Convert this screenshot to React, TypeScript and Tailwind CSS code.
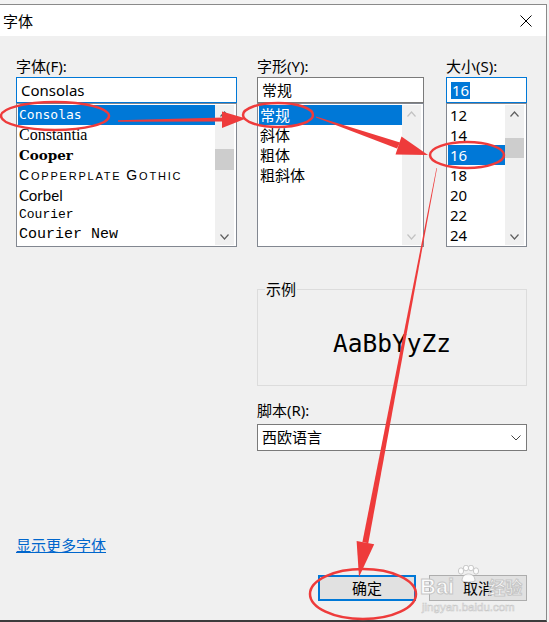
const RED = "#ee3b3b";

function Chevron({ dir, color }: { dir: "up" | "down"; color: string }) {
  return (
    <svg width="9" height="6" viewBox="0 0 9 6">
      <path
        d={dir === "up" ? "M0.5 5.5 L4.5 1 L8.5 5.5" : "M0.5 0.5 L4.5 5 L8.5 0.5"}
        fill="none"
        stroke={color}
        strokeWidth="1.2"
      />
    </svg>
  );
}

function ScrollBar({ thumb, disabled }: { thumb?: string; disabled?: boolean }) {
  const c = disabled ? "#c2c2c2" : "#606060";
  return (
    <div className="w-[19px] shrink-0 flex flex-col bg-[#f0f0f0] my-[1px] mr-[2px]">
      <div className="h-[17px] shrink-0 flex items-center justify-center">
        <Chevron dir="up" color={c} />
      </div>
      <div className="flex-1 flex flex-col">
        {thumb && <div className={`bg-[#cdcdcd] ${thumb}`} />}
      </div>
      <div className="h-[17px] shrink-0 flex items-center justify-center">
        <Chevron dir="down" color={c} />
      </div>
    </div>
  );
}

function Label({ children }: { children: React.ReactNode }) {
  return <div className="h-[21px] leading-[21px] text-[15px]">{children}</div>;
}

const sizes = ["12", "14", "16", "18", "20", "22", "24"];
const styles = ["常规", "斜体", "粗体", "粗斜体"];

export default function App() {
  return (
    <div className="relative w-[549px] h-[622px] bg-[#f3f3f3] pt-[4px] overflow-hidden font-['Noto_Sans','Noto_Sans_CJK_SC',sans-serif] text-black">
      <div className="w-[547px] h-[618px] flex flex-col border-t border-r border-[#8a8a8a] border-b-2 border-b-[#3c3c3c] bg-[#f0f0f0]">
        {/* title bar */}
        <div className="h-[31px] shrink-0 bg-white flex items-center justify-between pl-[3px] pr-[14px]">
          <span className="text-[15px] leading-[20px]">字体</span>
          <svg width="12" height="12" viewBox="0 0 12 12">
            <path d="M0.5 0.5 L11.5 11.5 M11.5 0.5 L0.5 11.5" stroke="#000" strokeWidth="1" />
          </svg>
        </div>

        <div className="flex-1 flex flex-col pl-[16px] pr-[19px] pt-[20px]">
          <div className="flex gap-[20px]">
            {/* font family */}
            <div className="w-[221px] flex flex-col">
              <Label>字体(F):</Label>
              <div className="h-[26px] border border-[#0078d7] bg-white pl-[4px] flex items-center text-[15px]">
                Consolas
              </div>
              <div className="h-[144px] border border-[#828790] bg-white flex">
                <div className="flex-1 pl-[1px] pt-[1px] overflow-hidden">
                  <div className="h-[20px] leading-[20px] bg-[#0078d7] text-white pl-[1px] font-['DejaVu_Sans_Mono',monospace] text-[13px]">
                    Consolas
                  </div>
                  <div className="h-[20px] leading-[20px] pl-[1px] font-['Liberation_Serif',serif] text-[16px]">
                    Constantia
                  </div>
                  <div className="h-[20px] leading-[20px] pl-[1px] font-['DejaVu_Serif',serif] font-black text-[13.5px]">
                    Cooper
                  </div>
                  <div className="h-[20px] leading-[20px] pl-[1px] font-['Liberation_Sans',sans-serif] tracking-[1.8px] whitespace-nowrap">
                    <span className="text-[14px]">C</span>
                    <span className="text-[11px]">OPPERPLATE </span>
                    <span className="text-[14px]">G</span>
                    <span className="text-[11px]">OTHIC</span>
                  </div>
                  <div className="h-[20px] leading-[20px] pl-[1px] font-['Lato',sans-serif] text-[15px]">
                    Corbel
                  </div>
                  <div className="h-[20px] leading-[20px] pl-[1px] font-['Liberation_Mono',monospace] text-[13px]">
                    Courier
                  </div>
                  <div className="h-[20px] leading-[20px] pl-[1px] font-['Liberation_Mono',monospace] text-[15px] whitespace-nowrap">
                    Courier New
                  </div>
                </div>
                <ScrollBar thumb="mt-[27px] h-[21px]" />
              </div>
            </div>

            {/* right section */}
            <div className="w-[270px] flex flex-col">
              <div className="flex gap-[22px]">
                <div className="w-[167px] flex flex-col">
                  <Label>字形(Y):</Label>
                  <div className="h-[26px] border border-[#7a7a7a] bg-white pl-[4px] flex items-center text-[15px]">
                    常规
                  </div>
                  <div className="h-[144px] border border-[#828790] bg-white flex">
                    <div className="flex-1 pl-[1px] pt-[1px] overflow-hidden">
                      {styles.map((s, i) => (
                        <div
                          key={s}
                          className={`h-[20px] leading-[20px] pl-[1px] text-[15px] ${i === 0 ? "bg-[#0078d7] text-white" : ""}`}
                        >
                          {s}
                        </div>
                      ))}
                    </div>
                    <ScrollBar disabled />
                  </div>
                </div>
                <div className="w-[81px] flex flex-col">
                  <Label>大小(S):</Label>
                  <div className="h-[26px] border border-[#0078d7] bg-white pl-[4px] flex items-center text-[15px]">
                    <span className="bg-[#0078d7] text-white leading-[17px] px-[1px]">16</span>
                  </div>
                  <div className="h-[144px] border border-[#828790] bg-white flex">
                    <div className="flex-1 pl-[1px] pt-[1px] overflow-hidden">
                      {sizes.map((s) => (
                        <div
                          key={s}
                          className={`h-[20px] leading-[20px] pl-[2px] text-[15px] ${s === "16" ? "bg-[#0078d7] text-white" : ""}`}
                        >
                          {s}
                        </div>
                      ))}
                    </div>
                    <ScrollBar thumb="mt-[16px] h-[20px]" />
                  </div>
                </div>
              </div>

              <fieldset className="mt-[32px] h-[107px] border border-[#dcdcdc]">
                <legend className="ml-[7px] px-[1px] text-[15px] leading-[20px]">示例</legend>
                <div className="pt-[30px] leading-[30px] text-center font-['DejaVu_Sans_Mono',monospace] text-[24.5px]">
                  AaBbYyZz
                </div>
              </fieldset>

              <div className="mt-[14px] h-[20px] leading-[20px] text-[15px]">脚本(R):</div>
              <div className="mt-[4px] h-[27px] border border-[#7a7a7a] bg-white flex items-center justify-between pl-[4px] pr-[5px] text-[15px]">
                <span>西欧语言</span>
                <svg width="10" height="6" viewBox="0 0 10 6">
                  <path d="M0.5 0.5 L5 5 L9.5 0.5" fill="none" stroke="#444" strokeWidth="1" />
                </svg>
              </div>
            </div>
          </div>

          <div className="mt-[84px] h-[20px] leading-[20px] text-[15px] text-[#0066cc] underline w-fit">
            显示更多字体
          </div>

          <div className="mt-[20px] flex justify-end gap-[13px]">
            <div className="w-[98px] h-[26px] border-2 border-[#0078d7] bg-[#e1e1e1] flex items-center justify-center text-[15px]">
              确定
            </div>
            <div className="w-[98px] h-[26px] border border-[#adadad] bg-[#e1e1e1] flex items-center justify-center text-[15px]">
              取消
            </div>
          </div>
        </div>
      </div>

      {/* baidu watermark */}
      <div className="absolute left-[420px] top-[562px] pointer-events-none opacity-90 flex flex-col">
        <div className="flex items-end h-[37px]">
          <span className="text-[22px] leading-[24px] font-bold text-white [-webkit-text-stroke:1px_#c4c4c4] font-['Liberation_Sans',sans-serif]">
            Bai
          </span>
          <svg width="24" height="18" viewBox="0 0 24 18" className="mb-[16px] ml-[2px]">
            <g fill="#fff" stroke="#c4c4c4" strokeWidth="1">
              <ellipse cx="5" cy="6" rx="2.6" ry="3.2" />
              <ellipse cx="10" cy="3" rx="2.6" ry="2.8" />
              <ellipse cx="15" cy="3" rx="2.6" ry="2.8" />
              <ellipse cx="20" cy="6" rx="2.6" ry="3.2" />
              <path d="M6 16 C6 11 9 9 12.5 9 C16 9 19 11 19 16 C16 17.5 9 17.5 6 16 Z" />
            </g>
          </svg>
          <span className="ml-[8px] text-[17px] leading-[22px] font-bold text-white [-webkit-text-stroke:1px_#c4c4c4]">
            经验
          </span>
        </div>
        <span className="mt-[2px] ml-[2px] text-[11.5px] leading-[12px] text-white [-webkit-text-stroke:0.6px_#c4c4c4] font-['Liberation_Sans',sans-serif]">
          jingyan.baidu.com
        </span>
      </div>

      {/* red annotations */}
      <svg className="absolute inset-0 pointer-events-none" width="549" height="622" viewBox="0 0 549 622">
        <g fill="none" stroke={RED} strokeWidth="2.5">
          <ellipse cx="55" cy="116" rx="54" ry="14" />
          <ellipse cx="278" cy="115" rx="35" ry="12" />
          <ellipse cx="467" cy="155" rx="37" ry="13" />
          <ellipse cx="363" cy="594" rx="53" ry="25" />
        </g>
        <g fill={RED}>
          <polygon points="118,120.3 224,117.5 224,121.5 118,121.7" />
          <polygon points="222,111.5 246,118.5 222,128" />
          <polygon points="316,116.5 400,142.5 397,148.5 316,117.5" />
          <polygon points="401.5,136.5 428,155 395.5,154.5" />
          <polygon points="436.5,168 437,168.2 368.3,543.2 362.4,542" />
          <polygon points="374.2,544.3 359,577 356.6,540.9" />
        </g>
      </svg>
    </div>
  );
}
